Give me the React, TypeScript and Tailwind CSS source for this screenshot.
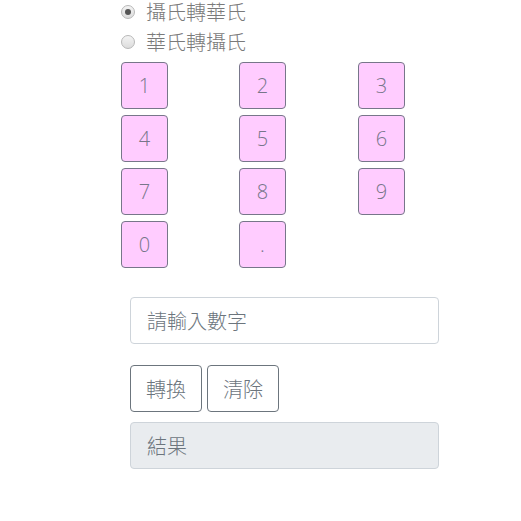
import { useState } from "react";

const keys = ["1", "2", "3", "4", "5", "6", "7", "8", "9", "0", "."];

const font = { fontFamily: '"Noto Sans CJK TC", "Liberation Sans", sans-serif' };

export default function App() {
  const [mode, setMode] = useState<"c2f" | "f2c">("c2f");
  const [value, setValue] = useState("");

  return (
    <div className="w-[521px] h-[521px] bg-white text-[#6c757d]" style={font}>
      {/* Mode radios */}
      <div className="pl-[121px] flex flex-col gap-[6px]">
        {[
          { id: "c2f", label: "攝氏轉華氏" },
          { id: "f2c", label: "華氏轉攝氏" },
        ].map((opt) => (
          <label
            key={opt.id}
            className="flex items-center h-[24px] text-[20px] leading-none cursor-pointer"
            onClick={() => setMode(opt.id as "c2f" | "f2c")}
          >
            <span className="w-[14px] h-[14px] rounded-full border border-[#b8b8b8] bg-gradient-to-b from-[#f4f4f4] to-[#dcdcdc] flex items-center justify-center -mt-[1px]">
              {mode === opt.id && <span className="w-[6px] h-[6px] rounded-full bg-[#555]" />}
            </span>
            <span className="ml-[11px] text-[#7a7a7a] font-light">{opt.label}</span>
          </label>
        ))}
      </div>

      {/* Keypad */}
      <div className="ml-[121px] mt-[8px] grid grid-cols-[118px_119px_118px] gap-y-[6px] w-[355px]">
        {keys.map((k) => (
          <button
            key={k}
            onClick={() => setValue(value + k)}
            className="w-[47px] h-[47px] rounded-[4px] border border-[#77768a] bg-[#ffccff] text-[#77768a] text-[20px] leading-none flex items-center justify-center"
            style={{ fontFamily: '"Open Sans", "Liberation Sans", sans-serif', fontWeight: 300 }}
          >
            {k}
          </button>
        ))}
      </div>

      {/* Input */}
      <div className="ml-[130px] w-[309px] mt-[29px]">
        <input
          value={value}
          onChange={(e) => setValue(e.target.value)}
          placeholder="請輸入數字"
          className="w-full h-[47px] px-4 rounded-[4px] border border-[#ced4da] text-[20px] font-light text-[#495057] placeholder:text-[#6c757d] outline-none"
        />

        <div className="flex gap-[5px] mt-[21px]">
          <button className="h-[47px] px-[15px] rounded-[4px] border border-[#6c757d] text-[20px] font-light text-[#6c757d] bg-white">
            轉換
          </button>
          <button
            onClick={() => setValue("")}
            className="h-[47px] px-[15px] rounded-[4px] border border-[#6c757d] text-[20px] font-light text-[#6c757d] bg-white"
          >
            清除
          </button>
        </div>

        <div className="mt-[10px] h-[47px] px-4 flex items-center rounded-[4px] border border-[#ced4da] bg-[#e9ecef] text-[20px] font-light text-[#6c757d]">
          結果
        </div>
      </div>
    </div>
  );
}
